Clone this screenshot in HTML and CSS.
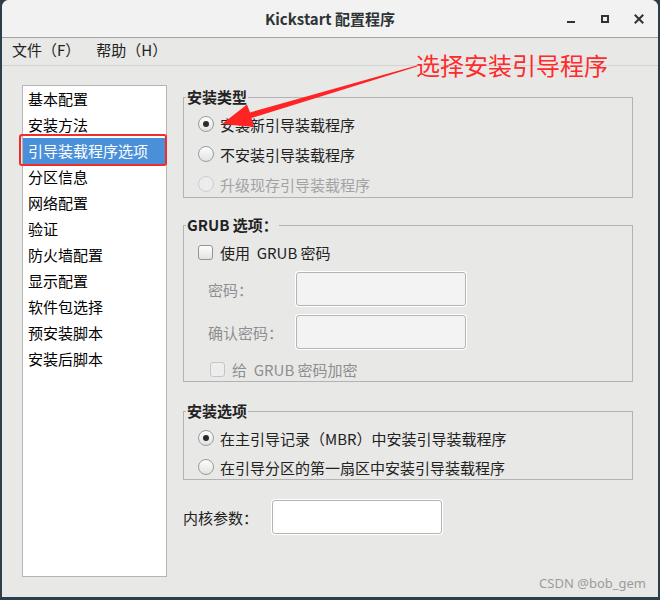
FILE: index.html
```html
<!DOCTYPE html>
<html lang="zh-CN">
<head>
<meta charset="utf-8">
<title>Kickstart 配置程序</title>
<link rel="stylesheet" href="styles.css">
</head>
<body>
<div class="window">
  <header class="titlebar">
    <div class="title">Kickstart 配置程序</div>
    <div class="controls">
      <span class="ctl"><svg width="16" height="16" viewBox="0 0 16 16"><rect x="4" y="10" width="8" height="2" fill="#2e3436"/></svg></span>
      <span class="ctl"><svg width="16" height="16" viewBox="0 0 16 16"><rect x="5" y="5" width="6" height="6" fill="none" stroke="#2e3436" stroke-width="2"/></svg></span>
      <span class="ctl"><svg width="16" height="16" viewBox="0 0 16 16"><path d="M4.5 4.5 L11.5 11.5 M11.5 4.5 L4.5 11.5" stroke="#2e3436" stroke-width="2" stroke-linecap="square"/></svg></span>
    </div>
  </header>
  <nav class="menubar">
    <span class="menu">文件（F）</span>
    <span class="menu">帮助（H）</span>
  </nav>
  <main class="content">
    <ul class="nav-list">
      <li>基本配置</li>
      <li>安装方法</li>
      <li class="selected">引导装载程序选项</li>
      <li>分区信息</li>
      <li>网络配置</li>
      <li>验证</li>
      <li>防火墙配置</li>
      <li>显示配置</li>
      <li>软件包选择</li>
      <li>预安装脚本</li>
      <li>安装后脚本</li>
    </ul>
    <section class="panel">
      <fieldset class="group group-type">
        <legend>安装类型</legend>
        <div class="opt"><span class="radio checked"></span><span>安装新引导装载程序</span></div>
        <div class="opt"><span class="radio"></span><span>不安装引导装载程序</span></div>
        <div class="opt disabled-light"><span class="radio disabled"></span><span>升级现存引导装载程序</span></div>
      </fieldset>
      <fieldset class="group group-grub">
        <legend>GRUB 选项<span class="colon">：</span></legend>
        <div class="opt"><span class="check"></span><span class="pre">使用  GRUB 密码</span></div>
        <div class="pwrow"><span class="pwlabel">密码<span class="colon">：</span></span><input class="field" type="password" disabled></div>
        <div class="pwrow"><span class="pwlabel">确认密码<span class="colon">：</span></span><input class="field" type="password" disabled></div>
        <div class="opt opt-indent disabled-text"><span class="check disabled"></span><span class="pre">给  GRUB 密码加密</span></div>
      </fieldset>
      <fieldset class="group group-opts">
        <legend>安装选项</legend>
        <div class="opt"><span class="radio checked"></span><span>在主引导记录（MBR）中安装引导装载程序</span></div>
        <div class="opt"><span class="radio"></span><span>在引导分区的第一扇区中安装引导装载程序</span></div>
      </fieldset>
      <div class="kernel-row">
        <span class="kernel-label">内核参数<span class="colon">：</span></span>
        <input class="field field-white" type="text">
      </div>
    </section>
  </main>
  <div class="callout">选择安装引导程序</div>
  <svg class="arrow" width="656" height="597" viewBox="2 0 656 597">
    <polygon fill="#ff2424" points="222,124 254,127 251.5,118 417.2,66.6 416.8,65.4 250,112.5 247,104.5"/>
  </svg>
  <div class="watermark">CSDN @bob_gem</div>
</div>
</body>
</html>
```
FILE: styles.css
```css
html, body {
  margin: 0;
  padding: 0;
}
body {
  background: #2d3e4b;
  width: 660px;
  height: 600px;
  overflow: hidden;
  font-family: "Noto Sans CJK SC", "Noto Sans", sans-serif;
  font-size: 15px;
  color: #222;
}
.window {
  position: relative;
  margin-left: 2px;
  width: 656px;
  height: 597px;
  background: #e8e8e7;
  border-radius: 7px 7px 0 0;
  display: flex;
  flex-direction: column;
}
.titlebar {
  box-sizing: border-box;
  height: 38px;
  border-bottom: 1px solid #a3a3a3;
  background: #f2f2f2;
  border-radius: 7px 7px 0 0;
  display: grid;
  grid-template-columns: 1fr auto 1fr;
  align-items: center;
}
.title {
  grid-column: 2;
  font-weight: bold;
  font-size: 15px;
  color: #2e3436;
  line-height: 20px;
}
.controls {
  grid-column: 3;
  justify-self: end;
  display: flex;
  padding-right: 2px;
}
.ctl {
  width: 34px;
  height: 37px;
  display: flex;
  align-items: center;
  justify-content: center;
}
.menubar {
  box-sizing: border-box;
  height: 28px;
  border-bottom: 1px solid #d3d3d1;
  display: flex;
  align-items: center;
  padding: 0 0 3px 10px;
  gap: 16px;
  color: #222;
}
.menu {
  line-height: 20px;
}
.colon {
  font-family: "Noto Sans CJK TC", "Noto Sans CJK SC", sans-serif;
}
.content {
  flex: 1;
  display: flex;
  gap: 16px;
  padding: 19px 25px 20px 20px;
  min-height: 0;
}
.nav-list {
  list-style: none;
  margin: 0;
  padding: 0;
  width: 145px;
  box-sizing: border-box;
  background: #fff;
  border: 1px solid #b5b5b1;
  color: #000;
}
.nav-list li {
  height: 26px;
  line-height: 26px;
  padding-left: 5px;
  white-space: nowrap;
}
.nav-list li.selected {
  position: relative;
  background: #4a90d9;
  color: #fff;
}
.nav-list li.selected::after {
  content: "";
  position: absolute;
  top: -4px;
  left: -4px;
  right: -1px;
  bottom: -2px;
  border: 2px solid #f22b2b;
  border-radius: 3px;
}
.panel {
  flex: 1;
  display: flex;
  flex-direction: column;
  padding-top: 3px;
}
.group {
  margin: 0;
  padding: 6px 0 0 0;
  border: 1px solid #b3b3b3;
  min-width: 0;
  display: flex;
  flex-direction: column;
}
.group legend {
  font-weight: bold;
  line-height: 18px;
  padding: 0 1px;
  margin-left: 2px;
  color: #222;
}
.group-type {
  gap: 6px;
  padding-bottom: 1px;
}
.group-grub {
  margin-top: 18px;
  padding-top: 6px;
  gap: 7px;
}
.group-opts {
  margin-top: 20px;
  gap: 5px;
}
.opt {
  height: 24px;
  display: flex;
  align-items: center;
  gap: 6px;
  padding-left: 14px;
  white-space: nowrap;
}
.opt-indent {
  padding-left: 26px;
}
.pre {
  white-space: pre;
}
.disabled-light {
  color: #a3a3a3;
}
.disabled-text {
  color: #8d8f90;
}
.radio {
  box-sizing: border-box;
  width: 16px;
  height: 16px;
  border-radius: 50%;
  border: 1px solid #9b9b9b;
  background: linear-gradient(#fdfdfd, #e2e2e2);
  display: flex;
  align-items: center;
  justify-content: center;
  flex: none;
}
.radio.checked::after {
  content: "";
  width: 6px;
  height: 6px;
  border-radius: 50%;
  background: #2a2a2a;
}
.radio.disabled {
  border-color: #cdcdcd;
  background: #ececec;
}
.check {
  box-sizing: border-box;
  width: 15px;
  height: 15px;
  border-radius: 3px;
  border: 1px solid #949494;
  background: linear-gradient(#fdfdfd, #e4e4e4);
  margin-right: 1px;
  flex: none;
}
.check.disabled {
  border-color: #c6c6c6;
  background: #ededed;
}
.pwrow {
  height: 36px;
  display: flex;
  align-items: center;
  padding-left: 24px;
  color: #8d8f90;
}
.pwlabel {
  width: 88px;
  flex: none;
}
.field {
  box-sizing: border-box;
  width: 170px;
  height: 34px;
  margin: 0;
  padding: 0 6px;
  border: 1px solid #b4b4b4;
  border-radius: 3px;
  background: #f3f3f3;
  box-shadow: 0 0 0 1px #fff;
  font: inherit;
  outline: none;
}
.field-white {
  background: #fff;
}
.kernel-row {
  margin-top: 19px;
  height: 36px;
  display: flex;
  align-items: center;
}
.kernel-label {
  width: 89px;
  flex: none;
}
.callout {
  position: absolute;
  left: 414px;
  top: 51px;
  font-size: 24px;
  line-height: 28px;
  color: #ff2b2b;
  white-space: nowrap;
}
.arrow {
  position: absolute;
  left: 0;
  top: 0;
  pointer-events: none;
}
.watermark {
  position: absolute;
  right: 12px;
  bottom: 6px;
  font-family: "Noto Sans", sans-serif;
  font-size: 13px;
  line-height: 16px;
  color: #9c9c9c;
}
```
